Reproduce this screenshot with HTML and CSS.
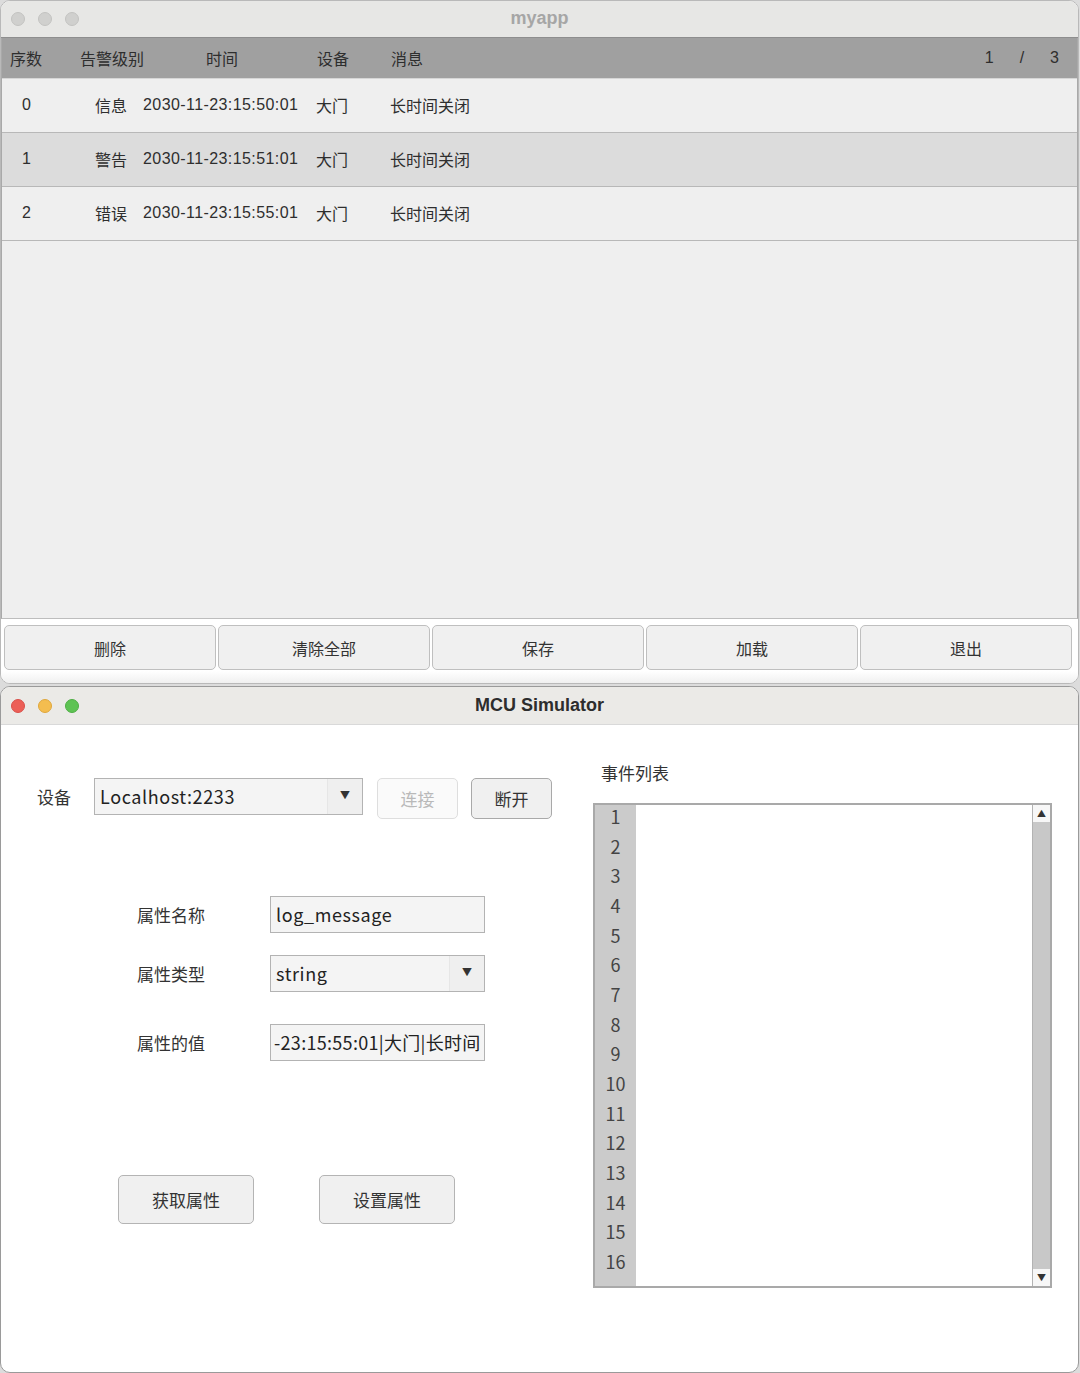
FILE: index.html
```html
<!DOCTYPE html>
<html lang="zh">
<head>
<meta charset="utf-8">
<title>myapp</title>
<link rel="stylesheet" href="styles.css">
</head>
<body>
<div class="screen">
  <div class="win win-top">
    <div class="titlebar titlebar-inactive">
      <div class="lights">
        <span class="light gray"></span><span class="light gray"></span><span class="light gray"></span>
      </div>
      <div class="title title-dim">myapp</div>
    </div>
    <div class="table">
      <div class="thead">
        <span class="h1">序数</span>
        <span class="h2">告警级别</span>
        <span class="h3">时间</span>
        <span class="h4">设备</span>
        <span class="h5">消息</span>
        <span class="pager"><span>1</span><span>/</span><span>3</span></span>
      </div>
      <div class="trow">
        <span class="c1">0</span><span class="c2">信息</span><span class="c3">2030-11-23:15:50:01</span><span class="c4">大门</span><span class="c5">长时间关闭</span>
      </div>
      <div class="trow sel">
        <span class="c1">1</span><span class="c2">警告</span><span class="c3">2030-11-23:15:51:01</span><span class="c4">大门</span><span class="c5">长时间关闭</span>
      </div>
      <div class="trow">
        <span class="c1">2</span><span class="c2">错误</span><span class="c3">2030-11-23:15:55:01</span><span class="c4">大门</span><span class="c5">长时间关闭</span>
      </div>
      <div class="tempty"></div>
    </div>
    <div class="actions">
      <button class="abtn">删除</button>
      <button class="abtn">清除全部</button>
      <button class="abtn">保存</button>
      <button class="abtn">加载</button>
      <button class="abtn">退出</button>
    </div>
  </div>

  <div class="win win-bottom">
    <div class="titlebar titlebar-active">
      <div class="lights">
        <span class="light red"></span><span class="light yellow"></span><span class="light green"></span>
      </div>
      <div class="title">MCU Simulator</div>
    </div>
    <div class="sim">
      <div class="left">
        <div class="devrow">
          <span class="devlabel">设备</span>
          <div class="combo combo-dev">
            <span class="combo-text">Localhost:2233</span>
            <span class="combo-arrow">▼</span>
          </div>
          <button class="qbtn disabled">连接</button>
          <button class="qbtn">断开</button>
        </div>
        <div class="props">
          <div class="prow prow-name">
            <span class="plabel">属性名称</span>
            <div class="field"><span class="field-text">log_message</span></div>
          </div>
          <div class="prow prow-type">
            <span class="plabel">属性类型</span>
            <div class="combo combo-type"><span class="combo-text">string</span><span class="combo-arrow">▼</span></div>
          </div>
          <div class="prow prow-value">
            <span class="plabel">属性的值</span>
            <div class="field field-clip"><span class="field-text">-23:15:55:01|大门|长时间</span></div>
          </div>
        </div>
        <div class="pbtns">
          <button class="pbtn">获取属性</button>
          <button class="pbtn">设置属性</button>
        </div>
      </div>
      <div class="right">
        <div class="evlabel">事件列表</div>
        <div class="editor">
          <div class="gutter">
            <div class="ln">1</div><div class="ln">2</div><div class="ln">3</div><div class="ln">4</div>
            <div class="ln">5</div><div class="ln">6</div><div class="ln">7</div><div class="ln">8</div>
            <div class="ln">9</div><div class="ln">10</div><div class="ln">11</div><div class="ln">12</div>
            <div class="ln">13</div><div class="ln">14</div><div class="ln">15</div><div class="ln">16</div>
          </div>
          <div class="textarea"></div>
          <div class="vscroll">
            <span class="sarrow">▲</span>
            <span class="strack"></span>
            <span class="sarrow">▼</span>
          </div>
        </div>
      </div>
    </div>
  </div>
</div>
</body>
</html>
```

FILE: styles.css
```css
* { box-sizing: border-box; }
html, body { margin: 0; padding: 0; }
body {
  width: 1080px;
  height: 1373px;
  overflow: hidden;
  background: #ffffff;
  font-family: "Liberation Sans", "Noto Sans CJK SC", sans-serif;
  color: #333;
}
.screen {
  display: flex;
  flex-direction: column;
  gap: 2px;
  width: 1080px;
  height: 1373px;
  background: #dcdcdc;
}

.win {
  width: 1079px;
  background: #fff;
  border: 1px solid #b9b9b9;
  border-radius: 10px;
  overflow: hidden;
  display: flex;
  flex-direction: column;
}
.win-top { height: 684px; }
.win-bottom { height: 687px; border-color: #9a9a9a; }

.titlebar {
  height: 37px;
  flex: none;
  display: flex;
  align-items: center;
  position: relative;
}
.titlebar-inactive { background: #e7e7e5; border-bottom: 1px solid #8e8e8e; }
.titlebar-active { background: #ebeae7; border-bottom: 1px solid #d9d9d9; height: 38px; }
.lights { display: flex; gap: 13px; padding-left: 10px; }
.light { width: 14px; height: 14px; border-radius: 50%; display: block; }
.light.gray { background: #d0d0ce; border: 1px solid #c3c3c1; }
.light.red { background: #ec5f57; border: 1px solid #d9504a; }
.light.yellow { background: #f4bd4f; border: 1px solid #dfa73c; }
.light.green { background: #5ec353; border: 1px solid #4eae44; }
.title {
  position: absolute;
  left: 0; right: 0; top: 0; bottom: 1px;
  display: flex;
  align-items: center;
  justify-content: center;
  font-size: 18px;
  font-weight: bold;
  color: #2d2d2d;
  font-family: "Liberation Sans", sans-serif;
}
.title-dim { color: #a6a6a6; }

/* top table */
.table {
  flex: none;
  display: flex;
  flex-direction: column;
  border-left: 1px solid #a9a9a9;
  border-right: 1px solid #a9a9a9;
  border-bottom: 1px solid #bdbdbd;
  font-size: 16px;
}
.thead {
  height: 41px;
  background: #a0a0a0;
  border-bottom: 1px solid #d6d6d6;
  display: flex;
  align-items: center;
  color: #2e2e2e;
  padding-bottom: 1px;
}
.h1 { width: 78px; padding-left: 8px; }
.h2 { width: 126px; }
.h3 { width: 111px; }
.h4 { width: 74px; }
.h5 { flex: 1; }
.pager { display: flex; gap: 26px; padding-right: 18px; }
.trow {
  height: 54px;
  background: #efefef;
  border-bottom: 1px solid #b8b8b8;
  display: flex;
  align-items: center;
  color: #2e2e2e;
  padding-bottom: 1px;
}
.trow.sel { background: #dcdcdc; }
.c1 { width: 93px; padding-left: 20px; }
.c2 { width: 48px; }
.c3 { width: 173px; letter-spacing: 0.42px; }
.c4 { width: 74px; }
.c5 { flex: 1; }
.tempty { height: 377px; background: #efefef; }

.actions {
  flex: 1;
  display: flex;
  gap: 2px;
  padding: 6px 4px 0 3px;
  background: linear-gradient(#ffffff 0, #ffffff 52px, #f0f0f0 100%);
}
.abtn {
  width: 212px;
  height: 45px;
  background: #f0f0f0;
  border: 1px solid #bfbfbf;
  border-radius: 5px;
  font-family: "Noto Sans CJK SC", sans-serif;
  font-size: 16px;
  color: #333;
  padding: 0;
}

/* simulator */
.sim {
  flex: 1;
  display: flex;
  font-family: "Noto Sans CJK SC", sans-serif;
  color: #333;
}
.left {
  width: 592px;
  display: flex;
  flex-direction: column;
  padding-top: 53px;
}
.devrow { display: flex; align-items: flex-start; height: 40px; }
.devlabel { width: 93px; padding-left: 36px; font-size: 17px; line-height: 37px; }
.combo {
  height: 37px;
  display: flex;
  background: #f4f4f4;
  border: 1px solid #b3b3b3;
  font-size: 18px;
  color: #222;
}
.combo-dev { width: 269px; }
.combo-type { width: 215px; }
.combo-text { flex: 1; padding-left: 5px; line-height: 35px; letter-spacing: 0.6px; }
.combo-arrow {
  width: 35px;
  background: #efefef;
  border-left: 1px solid #e6e6e6;
  font-size: 10px;
  color: #333;
  display: flex;
  align-items: center;
  justify-content: center;
  padding-bottom: 4px;
}
.qbtn {
  width: 81px;
  height: 41px;
  margin-left: 14px;
  background: #f0f0f0;
  border: 1px solid #a9a9a9;
  border-radius: 5px;
  font-family: "Noto Sans CJK SC", sans-serif;
  font-size: 17px;
  color: #333;
  padding: 0;
}
.qbtn + .qbtn { margin-left: 13px; }
.qbtn.disabled { background: #fafafa; border-color: #dedede; color: #b9b9b9; }

.props { display: flex; flex-direction: column; padding-top: 78px; }
.prow { display: flex; align-items: center; }
.prow-type { margin-top: 22px; }
.prow-value { margin-top: 32px; }
.plabel { width: 269px; padding-left: 136px; font-size: 17px; }
.field {
  width: 215px;
  height: 37px;
  background: #f4f4f4;
  border: 1px solid #b3b3b3;
  font-size: 18px;
  color: #222;
  overflow: hidden;
  white-space: nowrap;
  display: flex;
}
.field-text { padding-left: 5px; line-height: 35px; letter-spacing: 0.6px; }
.field-clip .field-text { padding-left: 3px; letter-spacing: 0.3px; }

.pbtns { display: flex; gap: 65px; padding-left: 117px; padding-top: 114px; }
.pbtn {
  width: 136px;
  height: 49px;
  background: #f0f0f0;
  border: 1px solid #b4b4b4;
  border-radius: 5px;
  font-family: "Noto Sans CJK SC", sans-serif;
  font-size: 17px;
  color: #333;
  padding: 0;
}

.right { flex: 1; display: flex; flex-direction: column; padding-top: 36px; }
.evlabel { font-size: 17px; padding-left: 8px; line-height: 24px; height: 42px; }
.editor {
  width: 459px;
  height: 485px;
  border: 2px solid #a9a9a9;
  display: flex;
  overflow: hidden;
  background: #fff;
}
.gutter {
  width: 41px;
  background: #cbcbcb;
  display: flex;
  flex-direction: column;
  align-items: center;
  font-size: 18px;
  color: #444;
  padding-top: 1px;
}
.ln { height: 29.67px; line-height: 20px; flex: none; }
.textarea { flex: 1; }
.vscroll {
  width: 18px;
  background: #c8c8c8;
  border-left: 1px solid #b3b3b3;
  display: flex;
  flex-direction: column;
}
.sarrow {
  height: 17px;
  background: #f7f7f7;
  font-size: 9px;
  color: #333;
  display: flex;
  align-items: center;
  justify-content: center;
}
.strack { flex: 1; }
```
